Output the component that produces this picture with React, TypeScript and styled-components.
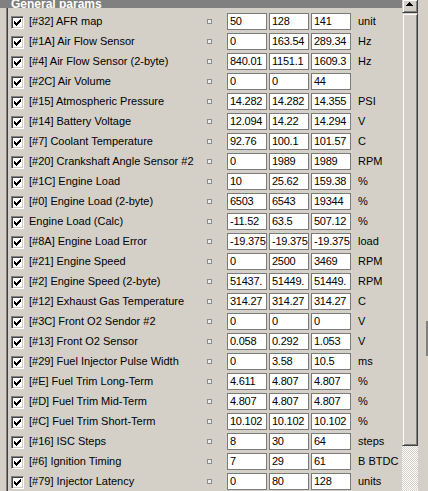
import styled, { createGlobalStyle } from "styled-components";

type Param = {
  id?: string;
  name: string;
  values: [string, string, string];
  unit: string;
};

const params: Param[] = [
  { id: "32", name: "AFR map", values: ["50", "128", "141"], unit: "unit" },
  { id: "1A", name: "Air Flow Sensor", values: ["0", "163.54", "289.34"], unit: "Hz" },
  { id: "4", name: "Air Flow Sensor (2-byte)", values: ["840.01", "1151.1", "1609.3"], unit: "Hz" },
  { id: "2C", name: "Air Volume", values: ["0", "0", "44"], unit: "" },
  { id: "15", name: "Atmospheric Pressure", values: ["14.282", "14.282", "14.355"], unit: "PSI" },
  { id: "14", name: "Battery Voltage", values: ["12.094", "14.22", "14.294"], unit: "V" },
  { id: "7", name: "Coolant Temperature", values: ["92.76", "100.1", "101.57"], unit: "C" },
  { id: "20", name: "Crankshaft Angle Sensor #2", values: ["0", "1989", "1989"], unit: "RPM" },
  { id: "1C", name: "Engine Load", values: ["10", "25.62", "159.38"], unit: "%" },
  { id: "0", name: "Engine Load (2-byte)", values: ["6503", "6543", "19344"], unit: "%" },
  { name: "Engine Load (Calc)", values: ["-11.52", "63.5", "507.12"], unit: "%" },
  { id: "8A", name: "Engine Load Error", values: ["-19.375", "-19.375", "-19.375"], unit: "load" },
  { id: "21", name: "Engine Speed", values: ["0", "2500", "3469"], unit: "RPM" },
  { id: "2", name: "Engine Speed (2-byte)", values: ["51437.", "51449.", "51449."], unit: "RPM" },
  { id: "12", name: "Exhaust Gas Temperature", values: ["314.27", "314.27", "314.27"], unit: "C" },
  { id: "3C", name: "Front O2 Sendor #2", values: ["0", "0", "0"], unit: "V" },
  { id: "13", name: "Front O2 Sensor", values: ["0.058", "0.292", "1.053"], unit: "V" },
  { id: "29", name: "Fuel Injector Pulse Width", values: ["0", "3.58", "10.5"], unit: "ms" },
  { id: "E", name: "Fuel Trim Long-Term", values: ["4.611", "4.807", "4.807"], unit: "%" },
  { id: "D", name: "Fuel Trim Mid-Term", values: ["4.807", "4.807", "4.807"], unit: "%" },
  { id: "C", name: "Fuel Trim Short-Term", values: ["10.102", "10.102", "10.102"], unit: "%" },
  { id: "16", name: "ISC Steps", values: ["8", "30", "64"], unit: "steps" },
  { id: "6", name: "Ignition Timing", values: ["7", "29", "61"], unit: "B BTDC" },
  { id: "79", name: "Injector Latency", values: ["0", "80", "128"], unit: "units" },
];

const GlobalStyle = createGlobalStyle`
  html, body {
    margin: 0;
    padding: 0;
    background: #d4d0c8;
    overflow: hidden;
  }
  body {
    font-family: "Liberation Sans", Arial, sans-serif;
    font-size: 11px;
    color: #000;
  }
`;

const Window = styled.div`
  display: flex;
  width: 428px;
  height: 491px;
  overflow: hidden;
`;

const Panel = styled.div`
  width: 402px;
  display: flex;
  flex-direction: column;
`;

const GroupHeader = styled.div`
  height: 10px;
  background: #808080;
  color: #fff;
  font-size: 12px;
  font-weight: bold;
  padding-left: 11px;
  overflow: hidden;
`;

const GroupTitle = styled.span`
  display: block;
  line-height: 8px;
`;

const GroupBody = styled.div`
  flex: 1;
  display: flex;
  padding-left: 6px;
`;

const List = styled.div`
  flex: 1;
  border-left: 1px solid #808080;
  box-shadow: inset 1px 0 #404040;
  padding: 3px 0 0 4px;
`;

const Row = styled.div`
  display: flex;
  align-items: flex-start;
  height: 20px;
  line-height: 20px;
  white-space: nowrap;
`;

const CheckBox = styled.span`
  box-sizing: border-box;
  width: 13px;
  height: 13px;
  margin: 5px 5px 0 0;
  background: #fff;
  border: 1px solid;
  border-color: #808080 #fff #fff #808080;
  box-shadow: inset 1px 1px #404040, inset -1px -1px #d4d0c8;

  svg {
    display: block;
    margin: 1px;
  }
`;

const Label = styled.span`
  width: 178px;
  overflow: hidden;
`;

const Marker = styled.span`
  box-sizing: border-box;
  width: 5px;
  height: 5px;
  margin: 8px 15px 0 0;
  border: 1px solid #8c8c8c;
  background: #ececec;
`;

const Field = styled.span`
  box-sizing: border-box;
  width: 40px;
  height: 17px;
  margin: 2px 2px 0 0;
  padding-left: 2px;
  border: 1px solid #7b7b7b;
  background: #fff;
  line-height: 15px;
  letter-spacing: -0.25px;
  overflow: hidden;
`;

const Unit = styled.span`
  margin-left: 5px;
`;

const ScrollBar = styled.div`
  width: 16px;
  display: flex;
  flex-direction: column;
`;

const raised = `
  box-sizing: border-box;
  background: #d4d0c8;
  border: 1px solid;
  border-color: #d4d0c8 #404040 #404040 #d4d0c8;
  box-shadow: inset 1px 1px #fff, inset -1px -1px #808080;
`;

const ArrowButton = styled.div`
  ${raised}
  border-top: none;
  height: 13px;
  display: flex;
  justify-content: center;
  padding: 2px 1px 0 0;

  svg {
    display: block;
  }
`;

const Thumb = styled.div`
  ${raised}
  height: 433px;
`;

const Track = styled.div`
  flex: 1;
  background: repeating-conic-gradient(#fff 0 25%, #d4d0c8 0 50%) 0 0 / 2px 2px;
`;

const Gutter = styled.div`
  width: 10px;
`;

const OuterThumbEdge = styled.div`
  width: 2px;
  height: 35px;
  margin: 321px 0 0 8px;
  background: #808080;
`;

const checkColumns = [2, 3, 4, 3, 2, 1, 0];

function Check() {
  return (
    <svg width="9" height="9" viewBox="0 0 9 9" shapeRendering="crispEdges">
      {checkColumns.map((top, i) => (
        <rect key={i} x={1 + i} y={1 + top} width="1" height="3" fill="#000" />
      ))}
    </svg>
  );
}

function UpArrow() {
  return (
    <svg width="7" height="4" viewBox="0 0 7 4" shapeRendering="crispEdges">
      <rect x="3" y="0" width="1" height="1" fill="#000" />
      <rect x="2" y="1" width="3" height="1" fill="#000" />
      <rect x="1" y="2" width="5" height="1" fill="#000" />
      <rect x="0" y="3" width="7" height="1" fill="#000" />
    </svg>
  );
}

const ParamRow = ({ param }: { param: Param }) => (
  <Row>
    <CheckBox>
      <Check />
    </CheckBox>
    <Label>{param.id ? `[#${param.id}] ${param.name}` : param.name}</Label>
    <Marker />
    {param.values.map((v, i) => (
      <Field key={i}>{v}</Field>
    ))}
    <Unit>{param.unit}</Unit>
  </Row>
);

const App = () => {
  return (
    <>
      <GlobalStyle />
      <Window>
        <Panel>
          <GroupHeader>
            <GroupTitle>General params</GroupTitle>
          </GroupHeader>
          <GroupBody>
            <List>
              {params.map((p) => (
                <ParamRow key={p.name} param={p} />
              ))}
            </List>
          </GroupBody>
        </Panel>
        <ScrollBar>
          <ArrowButton>
            <UpArrow />
          </ArrowButton>
          <Thumb />
          <Track />
        </ScrollBar>
        <Gutter>
          <OuterThumbEdge />
        </Gutter>
      </Window>
    </>
  );
};

export default App;
